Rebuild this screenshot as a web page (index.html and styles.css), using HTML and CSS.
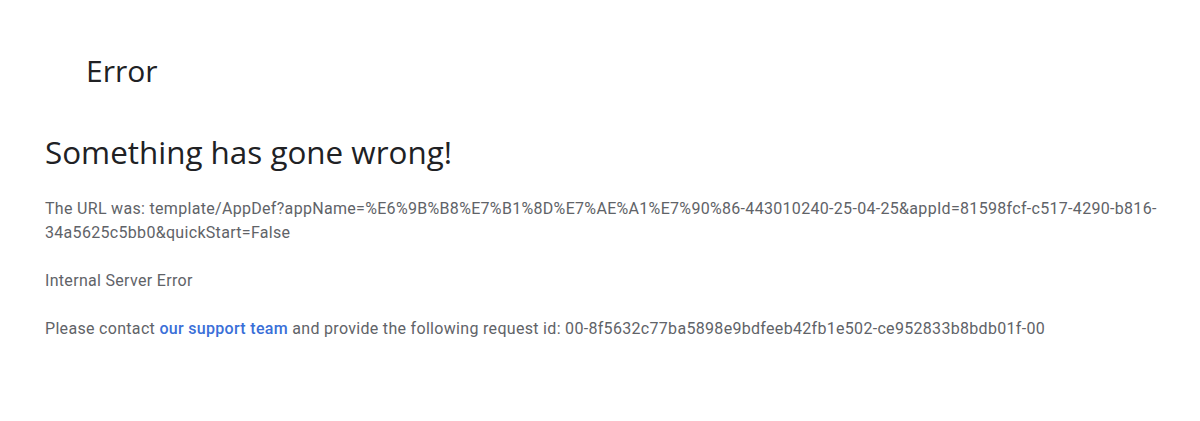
FILE: index.html
```html
<!DOCTYPE html>
<html>
<head>
<meta charset="utf-8">
<link rel="stylesheet" href="styles.css">
</head>
<body>
<header class="top">
  <div class="title">Error</div>
</header>
<main class="content">
  <h1 class="heading">Something has gone wrong!</h1>
  <p class="text">The URL was: template/AppDef?appName=%E6%9B%B8%E7%B1%8D%E7%AE%A1%E7%90%86-443010240-25-04-25&amp;appId=81598fcf-c517-4290-b816-34a5625c5bb0&amp;quickStart=False</p>
  <p class="text">Internal Server Error</p>
  <p class="text">Please contact <a class="link" href="#">our support team</a> and provide the following request id: 00-8f5632c77ba5898e9bdfeeb42fb1e502-ce952833b8bdb01f-00</p>
</main>
</body>
</html>
```
FILE: styles.css
```css
html, body {
  margin: 0;
  padding: 0;
  background: #ffffff;
}
body {
  font-family: Roboto, "Liberation Sans", sans-serif;
  color: #5f6368;
}
.top {
  height: 128px;
  display: flex;
  align-items: center;
  padding-left: 86px;
  padding-top: 12px;
  box-sizing: border-box;
}
.title {
  font-family: "Open Sans", Roboto, sans-serif;
  font-size: 30px;
  color: #202124;
  font-weight: 400;
}
.content {
  padding: 4px 30px 0 45px;
}
.heading {
  margin: 0 0 25px 0;
  font-family: "Open Sans", Roboto, sans-serif;
  font-size: 31.4px;
  font-weight: 400;
  color: #202124;
  line-height: 40px;
}
.text {
  margin: 0 0 24px 0;
  font-size: 16px;
  line-height: 24px;
  letter-spacing: 0.31px;
}
.link {
  color: #3a6fd8;
  font-weight: 500;
  text-decoration: none;
}
```
